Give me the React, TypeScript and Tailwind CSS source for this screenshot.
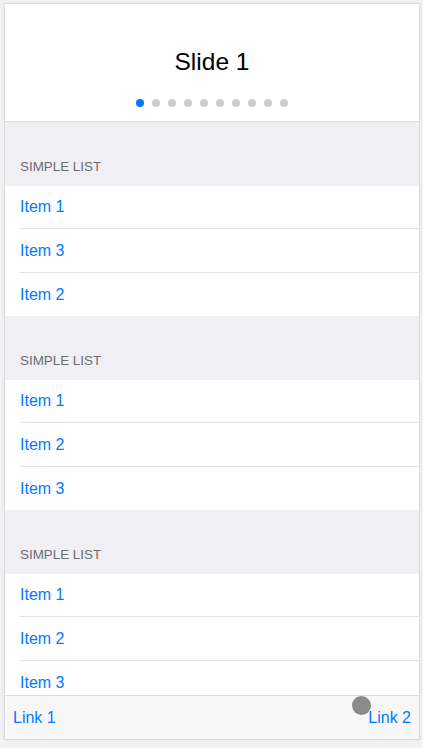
import React from "react";

const font = { fontFamily: '"Liberation Sans", Arial, sans-serif' };

function Section({ items }: { items: string[] }) {
  return (
    <div>
      <div className="h-[64px] flex items-end pb-[11px] pl-[15px]">
        <span className="text-[13.4px] leading-[17px] text-[#6d6d72]">SIMPLE LIST</span>
      </div>
      <ul className="bg-white">
        {items.map((it, i) => (
          <li
            key={i}
            className={
              "pl-[15px] " +
              (i === 0 ? "h-[43px]" : i === 1 ? "h-[44px]" : "h-[43px]")
            }
          >
            <div
              className={
                "h-full flex items-center text-[16px] text-[#007aff] " +
                (i < items.length - 1 ? "border-b border-[#e3e3e3]" : "")
              }
            >
              {it}
            </div>
          </li>
        ))}
      </ul>
    </div>
  );
}

export default function App() {
  return (
    <div className="w-[423px] h-[748px] bg-[#f2f2f2] pt-[3px] pl-[4px] overflow-hidden" style={font}>
      <div className="w-[416px] h-[737px] border border-[#dcdcdc] bg-[#efeff4] flex flex-col overflow-hidden shadow-[0_0_4px_rgba(0,0,0,0.06)] relative">
        <div className="h-[118px] shrink-0 bg-white border-b border-[#dcdcdc] relative flex items-center justify-center">
          <span className="text-[24.5px] text-black leading-none">Slide 1</span>
          <div className="absolute bottom-[14px] left-0 right-0 flex justify-center gap-[8px]">
            {Array.from({ length: 10 }).map((_, i) => (
              <span
                key={i}
                className={"w-[8px] h-[8px] rounded-full " + (i === 0 ? "bg-[#007aff]" : "bg-[#cccccc]")}
              />
            ))}
          </div>
        </div>
        <div className="flex-1 overflow-hidden">
          <Section items={["Item 1", "Item 3", "Item 2"]} />
          <Section items={["Item 1", "Item 2", "Item 3"]} />
          <Section items={["Item 1", "Item 2", "Item 3"]} />
        </div>
        <div className="h-[44px] shrink-0 bg-[#f7f7f7] border-t border-[#dcdcdc] flex items-center justify-between px-[8px] relative">
          <span className="text-[16px] text-[#007aff]">Link 1</span>
          <span className="text-[16px] text-[#007aff]">Link 2</span>
          <span className="absolute left-[347px] top-[0px] w-[19px] h-[19px] rounded-full bg-[#8a8a8a]" />
        </div>
      </div>
    </div>
  );
}
